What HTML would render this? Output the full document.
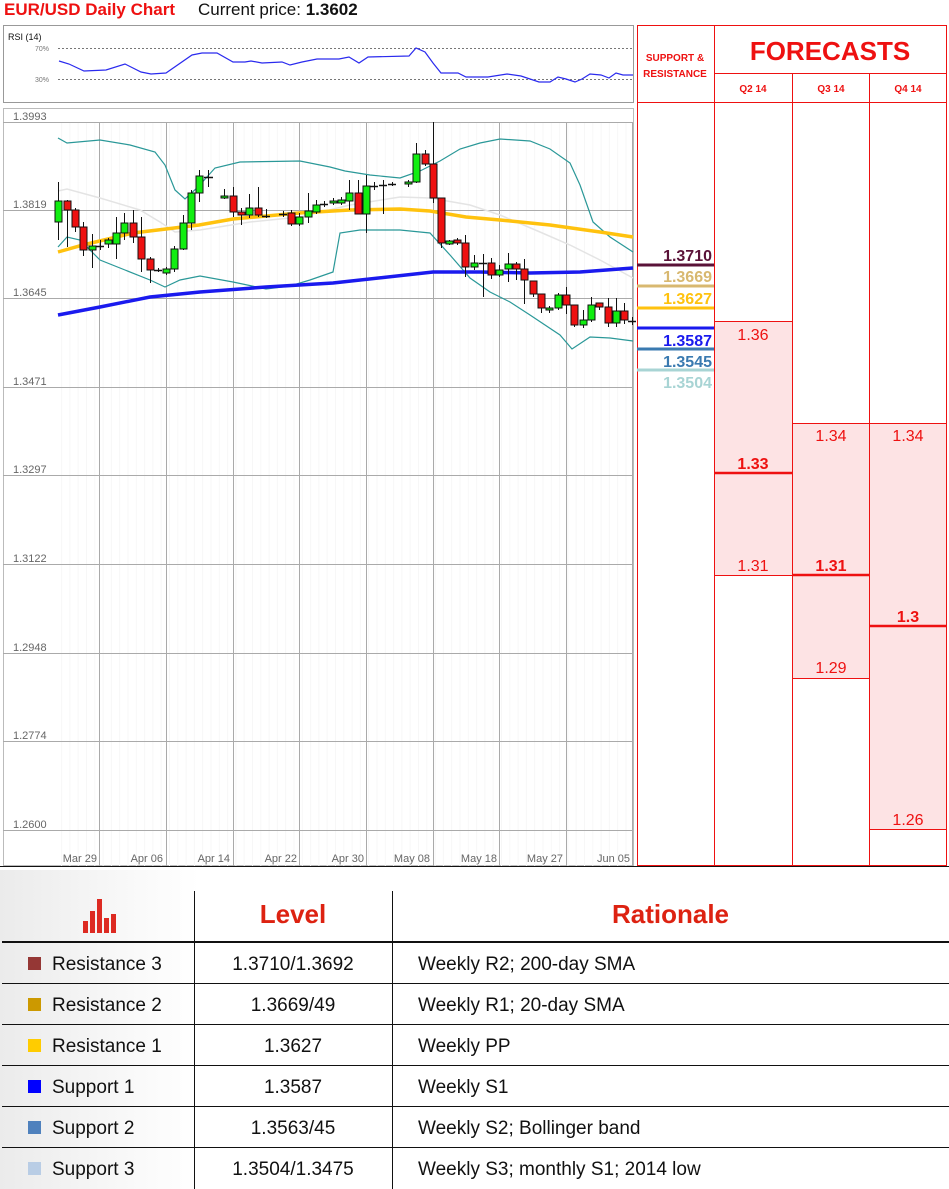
<!DOCTYPE html>
<html><head><meta charset="utf-8"><style>
body{margin:0;background:#fff;width:949px;height:1189px;position:relative;overflow:hidden;font-family:"Liberation Sans",sans-serif}
.a{position:absolute}
.t{font-size:19px;color:#111}
</style></head><body>
<div class="a" style="left:4px;top:0;font-size:17px;font-weight:bold;color:#ee1111;">EUR/USD Daily Chart</div>
<div class="a" style="left:198px;top:0;font-size:17px;color:#111;">Current price: <b>1.3602</b></div>

<svg class="a" style="left:0;top:0" width="949" height="890" xmlns="http://www.w3.org/2000/svg" font-family="Liberation Sans, sans-serif">
<defs><pattern id="mg" x="3" y="0" width="8.3" height="10" patternUnits="userSpaceOnUse"><line x1="0.5" y1="0" x2="0.5" y2="10" stroke="#f7f7f7"/></pattern></defs>
<rect x="3.5" y="25.5" width="630" height="77" fill="#fff" stroke="#999"/>
<text x="8" y="40" font-size="9" fill="#111">RSI (14)</text>
<text x="35" y="51" font-size="7" fill="#777">70%</text>
<text x="35" y="82" font-size="7" fill="#777">30%</text>
<line x1="58" y1="48.5" x2="633" y2="48.5" stroke="#777" stroke-dasharray="2,2"/>
<line x1="58" y1="79.5" x2="633" y2="79.5" stroke="#777" stroke-dasharray="2,2"/>
<polyline fill="none" stroke="#2a2aee" stroke-width="1.2" points="59,61 69,64 84,71 106,70 125,64 141,72 151,74 166,73 192,55 202,53 217,53 233,62 245,62 251,61 262,63 282,62 290,65 302,62 317,59 339,59 349,57 359,63 368,57 409,56 416,48 425,52 433,63 441,73 458,73 466,77 474,77 488,77 507,74 521,76 539,82 550,82 558,77 566,79 575,82 582,79 590,74 601,75 609,78 616,73 623,75 633,75"/>
<rect x="3.5" y="108.5" width="630" height="757" fill="#fff" stroke="#bbb"/>
<rect x="58" y="122" width="575" height="744" fill="url(#mg)"/>
<g stroke="#aaa" stroke-width="1">
<line x1="3" y1="122.5" x2="633" y2="122.5"/><line x1="3" y1="210.5" x2="633" y2="210.5"/><line x1="3" y1="298.5" x2="633" y2="298.5"/><line x1="3" y1="387.5" x2="633" y2="387.5"/><line x1="3" y1="475.5" x2="633" y2="475.5"/><line x1="3" y1="564.5" x2="633" y2="564.5"/><line x1="3" y1="653.5" x2="633" y2="653.5"/><line x1="3" y1="741.5" x2="633" y2="741.5"/><line x1="3" y1="830.5" x2="633" y2="830.5"/>
<line x1="99.5" y1="122" x2="99.5" y2="866"/><line x1="166.5" y1="122" x2="166.5" y2="866"/><line x1="233.5" y1="122" x2="233.5" y2="866"/><line x1="299.5" y1="122" x2="299.5" y2="866"/><line x1="366.5" y1="122" x2="366.5" y2="866"/><line x1="433.5" y1="122" x2="433.5" y2="866"/><line x1="499.5" y1="122" x2="499.5" y2="866"/><line x1="566.5" y1="122" x2="566.5" y2="866"/><line x1="632.5" y1="122" x2="632.5" y2="866"/>
</g>
<g font-size="11" fill="#666">
<text x="13" y="120">1.3993</text><text x="13" y="208">1.3819</text><text x="13" y="296">1.3645</text><text x="13" y="385">1.3471</text><text x="13" y="473">1.3297</text><text x="13" y="562">1.3122</text><text x="13" y="651">1.2948</text><text x="13" y="739">1.2774</text><text x="13" y="828">1.2600</text>
</g>
<g font-size="11" fill="#666" text-anchor="end">
<text x="97" y="862">Mar 29</text><text x="163" y="862">Apr 06</text><text x="230" y="862">Apr 14</text><text x="297" y="862">Apr 22</text><text x="364" y="862">Apr 30</text><text x="430" y="862">May 08</text><text x="497" y="862">May 18</text><text x="563" y="862">May 27</text><text x="630" y="862">Jun 05</text>
</g>
<line x1="0" y1="866.5" x2="949" y2="866.5" stroke="#111"/>
<polyline fill="none" stroke="#e4e4e4" stroke-width="1.5" points="58,191 67,189 100,198 140,210 160,222 175,232 200,230 250,222 300,217 350,205 400,197 430,198 470,205 500,215 540,232 570,245 600,260 633,278"/>
<polyline fill="none" stroke="#2a9898" stroke-width="1.2" points="58,138 67,143 100,140 130,145 155,152 165,165 175,190 185,199 198,187 215,168 240,162 300,161 330,167 345,171 370,175 400,178 420,171 440,161 460,149 480,143 500,139 530,141 550,149 570,163 580,185 593,222 610,237 633,252"/>
<polyline fill="none" stroke="#2a9898" stroke-width="1.2" points="58,247 67,237 80,240 100,260 125,270 150,280 165,287 180,280 200,276 233,282 266,289 290,286 310,280 333,272 340,233 360,230 400,230 420,232 430,233 450,255 470,278 490,292 510,302 530,315 560,335 572,349 590,337 610,338 633,341"/>
<polyline fill="none" stroke="#ffc20e" stroke-width="3.5" points="58,252 83,245 133,233 166,229 199,225 233,219 299,213 350,210 400,209 430,211 466,217 500,220 550,225 600,232 633,237"/>
<polyline fill="none" stroke="#1a1aee" stroke-width="3.5" points="58,315 100,307 150,297 200,292 266,287 333,283 433,272 480,272 530,273 580,272 633,268"/>
<path fill="none" stroke="#111" stroke-width="1" d="M58.5 182V240M67.5 200V247M75.5 208V232M83.5 222V256M92.5 234V268M100.5 240V250M108.5 238V248M116.5 217V259M124.5 213V240M133.5 210V243M141.5 217V272M150.5 257V283M158.5 268V272M166.5 267V275M174.5 246V272M183.5 215V250M191.5 190V230M199.5 170V202M208.5 170V187M224.5 189V199M233.5 187V217M241.5 208V225M249.5 194V218M258.5 187V217M266.5 209V218M283.5 211V217M291.5 210V226M299.5 213V226M308.5 193V223M316.5 200V214M324.5 201V207M333.5 198V205M341.5 197V205M349.5 180V210M358.5 180V213M366.5 175V233M374.5 182V190M383.5 180V214M392.5 182V186M408.5 180V187M416.5 143V183M425.5 150V166M433.5 122V203M441.5 198V248M449.5 240V245M457.5 238V245M465.5 235V277M474.5 255V270M483.5 254V297M491.5 258V279M499.5 265V277M508.5 253V282M516.5 262V280M524.5 259V304M533.5 281V297M541.5 294V313M549.5 306V313M558.5 293V310M566.5 287V314M574.5 305V327M583.5 310V328M591.5 297V322M599.5 303V310M608.5 298V327M616.5 298V327M624.5 303V324M632.5 317V325"/>
<path fill="none" stroke="#111" stroke-width="1.5" d="M96 246.5H104M154 270.5H162M204 177.5H213M262 216.5H270M279 214.5H287M320 204.5H328M370 186.5H378M379 185.5H387M388 184.5H396M479 263.5H487M628 321.5H636"/>
<g stroke="#111" stroke-width="1">
<g fill="#11ee11">
<rect x="55" y="201" width="7" height="21"/><rect x="89" y="246" width="7" height="4"/><rect x="105" y="240" width="7" height="4"/><rect x="113" y="233" width="7" height="11"/><rect x="121" y="223" width="7" height="10"/><rect x="163" y="269" width="7" height="4"/><rect x="171" y="249" width="7" height="20"/><rect x="180" y="223" width="7" height="26"/><rect x="188" y="193" width="7" height="30"/><rect x="196" y="176" width="7" height="17"/><rect x="221" y="196" width="7" height="2"/><rect x="246" y="208" width="7" height="7"/><rect x="296" y="217" width="7" height="7"/><rect x="305" y="211" width="7" height="6"/><rect x="313" y="205" width="7" height="7"/><rect x="330" y="201" width="7" height="2"/><rect x="338" y="200" width="7" height="3"/><rect x="346" y="193" width="7" height="8"/><rect x="363" y="186" width="7" height="28"/><rect x="405" y="182" width="7" height="2"/><rect x="413" y="154" width="7" height="28"/><rect x="446" y="241" width="7" height="3"/><rect x="471" y="263" width="7" height="4"/><rect x="496" y="270" width="7" height="5"/><rect x="505" y="264" width="7" height="5"/><rect x="546" y="308" width="7" height="2"/><rect x="555" y="295" width="7" height="13"/><rect x="580" y="320" width="7" height="5"/><rect x="588" y="305" width="7" height="15"/><rect x="613" y="311" width="7" height="12"/>
</g>
<g fill="#ee1111">
<rect x="64" y="201" width="7" height="9"/><rect x="72" y="210" width="7" height="17"/><rect x="80" y="227" width="7" height="23"/><rect x="130" y="223" width="7" height="14"/><rect x="138" y="237" width="7" height="22"/><rect x="147" y="259" width="7" height="11"/><rect x="230" y="196" width="7" height="16"/><rect x="238" y="212" width="7" height="3"/><rect x="255" y="208" width="7" height="7"/><rect x="288" y="213" width="7" height="11"/><rect x="355" y="193" width="7" height="21"/><rect x="422" y="154" width="7" height="10"/><rect x="430" y="164" width="7" height="34"/><rect x="438" y="198" width="7" height="45"/><rect x="454" y="240" width="7" height="3"/><rect x="462" y="243" width="7" height="24"/><rect x="488" y="263" width="7" height="12"/><rect x="513" y="264" width="7" height="5"/><rect x="521" y="269" width="7" height="11"/><rect x="530" y="281" width="7" height="13"/><rect x="538" y="294" width="7" height="14"/><rect x="563" y="295" width="7" height="10"/><rect x="571" y="305" width="7" height="20"/><rect x="596" y="303" width="7" height="4"/><rect x="605" y="307" width="7" height="16"/><rect x="621" y="311" width="7" height="9"/>
</g></g>
<rect x="714" y="321" width="78" height="254" fill="#fde3e4"/>
<rect x="792" y="423" width="77" height="255" fill="#fde3e4"/>
<rect x="869" y="423" width="78" height="406" fill="#fde3e4"/>
<g stroke="#ee1111" stroke-width="1">
<rect x="637.5" y="25.5" width="309" height="840" fill="none"/>
<line x1="714.5" y1="25" x2="714.5" y2="866"/><line x1="792.5" y1="73" x2="792.5" y2="866"/><line x1="869.5" y1="73" x2="869.5" y2="866"/>
<line x1="714" y1="73.5" x2="947" y2="73.5"/><line x1="637" y1="102.5" x2="947" y2="102.5"/>
<line x1="714" y1="321.5" x2="792" y2="321.5"/><line x1="714" y1="575.5" x2="792" y2="575.5"/>
<line x1="792" y1="423.5" x2="947" y2="423.5"/><line x1="792" y1="678.5" x2="869" y2="678.5"/><line x1="869" y1="829.5" x2="947" y2="829.5"/>
</g>
<g stroke="#ee1111" stroke-width="2.5"><line x1="714" y1="473" x2="792" y2="473"/><line x1="792" y1="575" x2="869" y2="575"/><line x1="869" y1="626" x2="947" y2="626"/></g>
<g fill="#ee1111" text-anchor="middle">
<text x="675" y="61" font-size="10" font-weight="bold">SUPPORT &amp;</text>
<text x="675" y="77" font-size="10" font-weight="bold">RESISTANCE</text>
<text x="830" y="60" font-size="26" font-weight="bold">FORECASTS</text>
<text x="753" y="92" font-size="10" font-weight="bold">Q2 14</text><text x="831" y="92" font-size="10" font-weight="bold">Q3 14</text><text x="908" y="92" font-size="10" font-weight="bold">Q4 14</text>
<g font-size="16"><text x="753" y="340">1.36</text><text x="753" y="571">1.31</text><text x="831" y="441">1.34</text><text x="831" y="673">1.29</text><text x="908" y="441">1.34</text><text x="908" y="825">1.26</text></g>
<g font-size="16" font-weight="bold"><text x="753" y="469">1.33</text><text x="831" y="571">1.31</text><text x="908" y="622">1.3</text></g>
</g>
<g font-size="16" font-weight="bold" text-anchor="end">
<text x="712" y="261" fill="#5a1238">1.3710</text><text x="712" y="282" fill="#d8b870">1.3669</text><text x="712" y="304" fill="#ffc20e">1.3627</text><text x="712" y="346" fill="#1a1aee">1.3587</text><text x="712" y="367" fill="#3a7ab0">1.3545</text><text x="712" y="388" fill="#a8d4d4">1.3504</text>
</g>
<g stroke-width="3"><line x1="637" y1="265" x2="714" y2="265" stroke="#5a1238"/><line x1="637" y1="286" x2="714" y2="286" stroke="#d8b870"/><line x1="637" y1="308" x2="714" y2="308" stroke="#ffc20e"/><line x1="637" y1="328" x2="714" y2="328" stroke="#1a1aee"/><line x1="637" y1="349" x2="714" y2="349" stroke="#3a7ab0"/><line x1="637" y1="370" x2="714" y2="370" stroke="#a8d4d4"/></g>
</svg>

<div class="a" style="left:0;top:870px;width:200px;height:319px;background:linear-gradient(90deg,#ebebeb,#fafafa 70%,#fff)"></div>
<svg class="a" style="left:0;top:870px" width="949" height="319" xmlns="http://www.w3.org/2000/svg">
<g fill="#dd2a22"><rect x="83" y="51" width="5" height="12"/><rect x="90" y="41" width="5" height="22"/><rect x="97" y="29" width="5" height="34"/><rect x="104" y="48" width="5" height="15"/><rect x="111" y="44" width="5" height="19"/></g>
<g stroke="#111"><line x1="194.5" y1="21" x2="194.5" y2="319"/><line x1="392.5" y1="21" x2="392.5" y2="319"/>
<line x1="2" y1="72" x2="949" y2="72" stroke-width="2"/><line x1="2" y1="113.5" x2="949" y2="113.5"/><line x1="2" y1="154.5" x2="949" y2="154.5"/><line x1="2" y1="195.5" x2="949" y2="195.5"/><line x1="2" y1="236.5" x2="949" y2="236.5"/><line x1="2" y1="277.5" x2="949" y2="277.5"/></g>
</svg>
<div class="a" style="left:194px;top:899px;width:198px;text-align:center;font-size:26px;font-weight:bold;color:#dd2211;">Level</div>
<div class="a" style="left:392px;top:899px;width:557px;text-align:center;font-size:26px;font-weight:bold;color:#dd2211;">Rationale</div>
<div class="a" style="left:28px;top:957px;width:13px;height:13px;background:#953735"></div>
<div class="a" style="left:28px;top:998px;width:13px;height:13px;background:#cc9900"></div>
<div class="a" style="left:28px;top:1039px;width:13px;height:13px;background:#ffcc00"></div>
<div class="a" style="left:28px;top:1080px;width:13px;height:13px;background:#0000ff"></div>
<div class="a" style="left:28px;top:1121px;width:13px;height:13px;background:#4f81bd"></div>
<div class="a" style="left:28px;top:1162px;width:13px;height:13px;background:#b9cde5"></div>
<div class="a t" style="left:52px;top:954px">Resistance 3</div>
<div class="a t" style="left:52px;top:995px">Resistance 2</div>
<div class="a t" style="left:52px;top:1036px">Resistance 1</div>
<div class="a t" style="left:52px;top:1077px">Support 1</div>
<div class="a t" style="left:52px;top:1118px">Support 2</div>
<div class="a t" style="left:52px;top:1159px">Support 3</div>
<div class="a t" style="left:194px;width:198px;text-align:center;top:954px">1.3710/1.3692</div>
<div class="a t" style="left:194px;width:198px;text-align:center;top:995px">1.3669/49</div>
<div class="a t" style="left:194px;width:198px;text-align:center;top:1036px">1.3627</div>
<div class="a t" style="left:194px;width:198px;text-align:center;top:1077px">1.3587</div>
<div class="a t" style="left:194px;width:198px;text-align:center;top:1118px">1.3563/45</div>
<div class="a t" style="left:194px;width:198px;text-align:center;top:1159px">1.3504/1.3475</div>
<div class="a t" style="left:418px;top:954px">Weekly R2; 200-day SMA</div>
<div class="a t" style="left:418px;top:995px">Weekly R1; 20-day SMA</div>
<div class="a t" style="left:418px;top:1036px">Weekly PP</div>
<div class="a t" style="left:418px;top:1077px">Weekly S1</div>
<div class="a t" style="left:418px;top:1118px">Weekly S2; Bollinger band</div>
<div class="a t" style="left:418px;top:1159px">Weekly S3; monthly S1; 2014 low</div>
</body></html>
